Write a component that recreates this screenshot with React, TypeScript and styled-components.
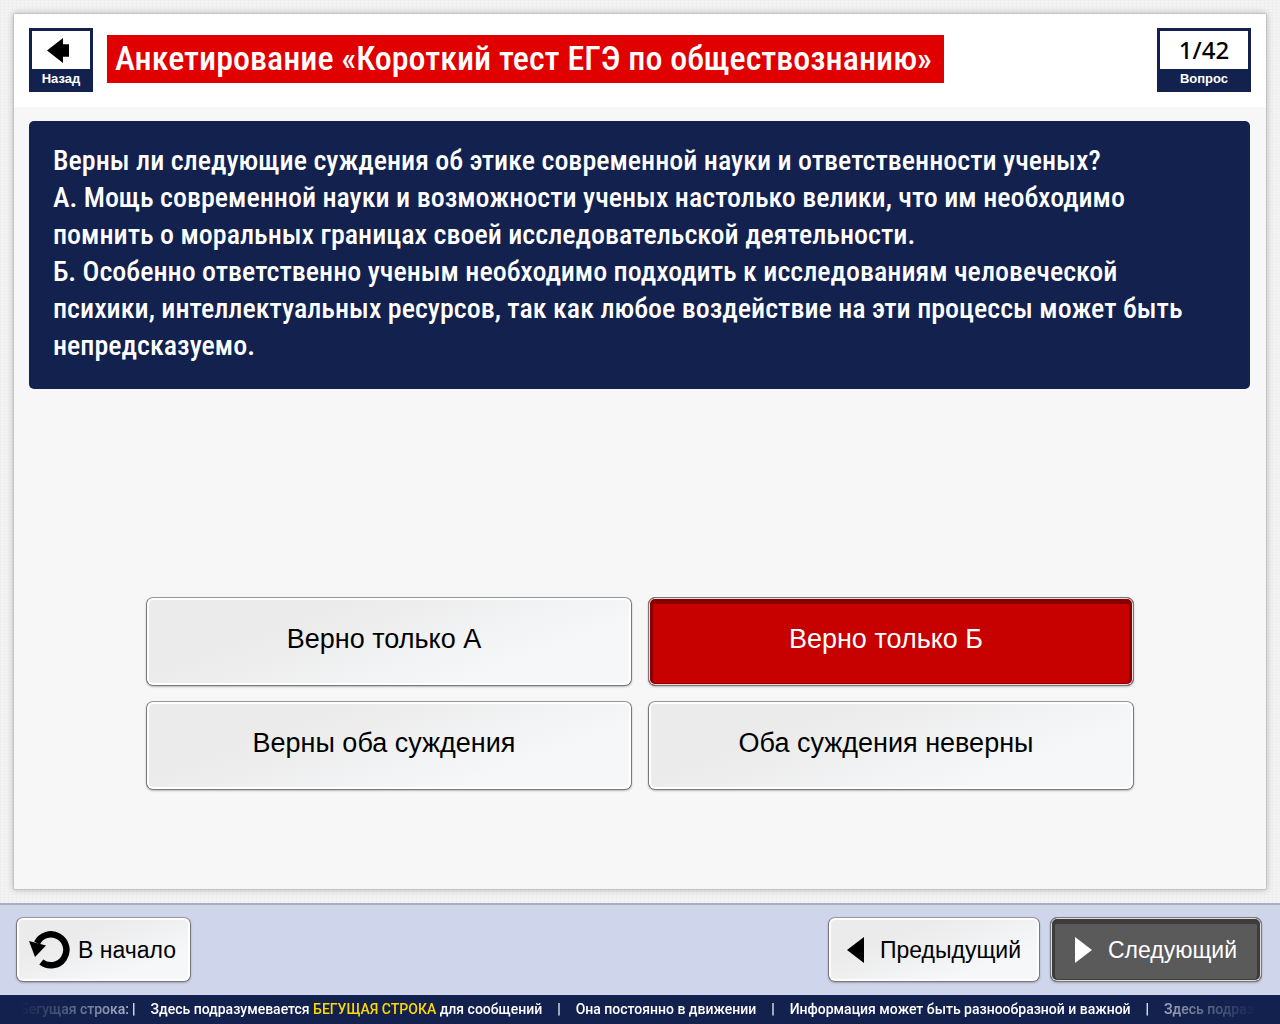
import React, { useState } from 'react';
import styled, { createGlobalStyle, css } from 'styled-components';

const navy = '#13214f';
const condensed = "'Roboto Condensed', 'Open Sans Condensed', 'Liberation Sans', sans-serif";
const plain = "'Liberation Sans', Arial, sans-serif";

const GlobalStyle = createGlobalStyle`
  *, *::before, *::after { box-sizing: border-box; }
  body { margin: 0; font-family: ${plain}; }
  button { font-family: inherit; cursor: pointer; }
`;

const Screen = styled.div`
  display: flex;
  flex-direction: column;
  min-height: 100vh;
  background-color: #f3f3f3;
  background-image:
    repeating-linear-gradient(0deg, rgba(0, 0, 0, 0.01) 0 1px, transparent 1px 3px),
    repeating-linear-gradient(90deg, rgba(0, 0, 0, 0.01) 0 1px, transparent 1px 4px);
`;

const Panel = styled.main`
  flex: 1;
  display: flex;
  flex-direction: column;
  margin: 13px;
  border: 1px solid #c3c3c3;
  border-radius: 2px;
  background: #f7f7f7;
  box-shadow: 0 0 6px rgba(0, 0, 0, 0.24);
`;

const Header = styled.header`
  display: flex;
  align-items: center;
  gap: 14px;
  padding: 14px 15px 15px;
  background: #fff;
`;

const tile = css`
  display: flex;
  flex-direction: column;
  flex: none;
  height: 64px;
  padding: 0;
  border: 3px solid ${navy};
  background: #fff;
  color: #000;
`;

const TileFace = styled.span`
  flex: 1;
  display: flex;
  align-items: center;
  justify-content: center;
`;

const ArrowFace = styled(TileFace)`
  padding-right: 6px;
`;

const TileLabel = styled.span`
  background: ${navy};
  color: #fff;
  font: 700 13px/20px ${plain};
  text-align: center;
`;

const BackButton = styled.button`
  ${tile}
  align-items: stretch;
  width: 64px;
`;

const Counter = styled.div`
  ${tile}
  width: 94px;
  margin-left: auto;
`;

const CounterValue = styled(TileFace)`
  font: 500 24px/36px 'Noto Sans', 'Open Sans', sans-serif;
`;

const Title = styled.h1`
  margin: 0 0 2px;
  padding: 0 12px 2px 8px;
  background: #e10000;
  color: #fff;
  font: 500 34px/46px ${condensed};
`;

const Question = styled.section`
  margin: 14px 16px 0 15px;
  padding: 21px 16px 25px 24px;
  border-radius: 5px;
  background: ${navy};
  color: #fff;
  font: 500 28px/37px ${condensed};

  p { margin: 0; }
`;

const Answers = styled.div`
  display: grid;
  grid-template-columns: 1fr 1fr;
  gap: 15px 16px;
  width: calc(100% - 32px);
  max-width: 988px;
  margin: auto auto 99px;
  padding-top: 24px;
`;

const raised = css`
  border: 1px solid #77777c;
  border-top-color: #98989c;
  border-radius: 7px;
  background: linear-gradient(160deg, #ebebeb 30%, #f6f7f9 75%);
  box-shadow: inset 0 0 0 2px #fff, 0 1px 2px rgba(0, 0, 0, 0.25);
  color: #000;
`;

const pressed = css<{ $fill: string; $edge: string }>`
  border: 1px solid #77777c;
  border-radius: 7px;
  background: ${(p) => p.$fill};
  box-shadow:
    inset 0 0 0 1px #e4dede,
    inset 0 0 0 2px ${(p) => p.$edge},
    inset 4px 0 0 ${(p) => p.$edge},
    inset -4px 0 0 ${(p) => p.$edge},
    inset 0 6px 0 ${(p) => p.$edge},
    0 1px 2px rgba(0, 0, 0, 0.25);
  color: #fff;
`;

const Answer = styled.button<{ $selected: boolean; $fill: string; $edge: string }>`
  ${(p) => (p.$selected ? pressed : raised)}
  height: 89px;
  padding: 0 18px 6px 8px;
  font-size: 27px;
  line-height: 32px;
`;

const Footer = styled.footer`
  border-top: 2px solid #a9afc1;
  background: #cfd6eb;
`;

const Nav = styled.nav`
  display: flex;
  gap: 10px;
  padding: 12px 18px 13px 16px;
`;

const NavButton = styled.button<{ $active?: boolean; $fill: string; $edge: string }>`
  ${(p) => (p.$active ? pressed : raised)}
  display: flex;
  align-items: center;
  justify-content: center;
  gap: 16px;
  min-width: 212px;
  height: 65px;
  padding: 0 16px;
  font-size: 23px;
  line-height: 28px;
`;

const StartButton = styled(NavButton)`
  gap: 7px;
  min-width: 175px;
  margin-right: auto;
  padding: 0 14px 0 12px;
`;

const Ticker = styled.div`
  height: 29px;
  overflow: hidden;
  background: ${navy};
`;

const TickerLine = styled.p`
  display: flex;
  gap: 15px;
  margin: 0;
  padding-left: 20px;
  color: #fff;
  font: 500 14px/28px Roboto, ${plain};
  white-space: nowrap;
  mask-image: linear-gradient(
    90deg,
    transparent 20px,
    rgba(0, 0, 0, 0.65) 130px,
    #000 131px,
    #000 calc(100% - 130px),
    rgba(0, 0, 0, 0.6) calc(100% - 116px),
    transparent calc(100% - 24px)
  );
`;

const TickerLead = styled.span`
  display: flex;
  gap: 3px;
`;

const Accent = styled.span`
  color: #ffd800;
`;

const answers = ['Верно только А', 'Верно только Б', 'Верны оба суждения', 'Оба суждения неверны'];

const BackIcon = () => (
  <svg width="22" height="25" viewBox="0 0 22 25" aria-hidden="true">
    <path d="M0 12.5 16 0v6.300h6v12.400h-6V25z" fill="currentColor" />
  </svg>
);

const RestartIcon = () => (
  <svg width="42" height="38" viewBox="0 0 42 38" aria-hidden="true">
    <path d="M8 12A15.500 15.500 0 1 1 12.300 31" fill="none" stroke="currentColor" strokeWidth="6.500" />
    <path d="M0 10 17 14.500 6 26z" fill="currentColor" />
  </svg>
);

const Triangle = ({ right = false }: { right?: boolean }) => (
  <svg width="17" height="26" viewBox="0 0 17 26" aria-hidden="true">
    <path d={right ? 'M0 0 17 13 0 26z' : 'M17 0 0 13 17 26z'} fill="currentColor" />
  </svg>
);

export default function App() {
  const [selected, setSelected] = useState(1);

  return (
    <>
      <GlobalStyle />
      <Screen>
        <Panel>
          <Header>
            <BackButton type="button">
              <ArrowFace><BackIcon /></ArrowFace>
              <TileLabel>Назад</TileLabel>
            </BackButton>
            <Title>Анкетирование «Короткий тест ЕГЭ по обществознанию»</Title>
            <Counter>
              <CounterValue>1/42</CounterValue>
              <TileLabel>Вопрос</TileLabel>
            </Counter>
          </Header>

          <Question>
            <p>Верны ли следующие суждения об этике современной науки и ответственности ученых?</p>
            <p>
              А. Мощь современной науки и возможности ученых настолько велики, что им необходимо
              <br />
              помнить о моральных границах своей исследовательской деятельности.
            </p>
            <p>
              Б. Особенно ответственно ученым необходимо подходить к исследованиям человеческой
              <br />
              психики, интеллектуальных ресурсов, так как любое воздействие на эти процессы может быть
              <br />
              непредсказуемо.
            </p>
          </Question>

          <Answers>
            {answers.map((text, i) => (
              <Answer
                key={text}
                type="button"
                aria-pressed={i === selected}
                $selected={i === selected}
                $fill="#c70000"
                $edge="#8a0000"
                onClick={() => setSelected(i)}
              >
                {text}
              </Answer>
            ))}
          </Answers>
        </Panel>

        <Footer>
          <Nav>
            <StartButton type="button" $fill="#5a5a5a" $edge="#3c3c3c">
              <RestartIcon />
              В начало
            </StartButton>
            <NavButton type="button" $fill="#5a5a5a" $edge="#3c3c3c">
              <Triangle />
              Предыдущий
            </NavButton>
            <NavButton type="button" $active $fill="#5a5a5a" $edge="#3c3c3c">
              <Triangle right />
              Следующий
            </NavButton>
          </Nav>
          <Ticker>
            <TickerLine>
              <TickerLead>
                <span>Бегущая строка:</span>
                <span>|</span>
              </TickerLead>
              <span>
                Здесь подразумевается <Accent>БЕГУЩАЯ СТРОКА</Accent> для сообщений
              </span>
              <span>|</span>
              <span>Она постоянно в движении</span>
              <span>|</span>
              <span>Информация может быть разнообразной и важной</span>
              <span>|</span>
              <span>Здесь подразу</span>
            </TickerLine>
          </Ticker>
        </Footer>
      </Screen>
    </>
  );
}
